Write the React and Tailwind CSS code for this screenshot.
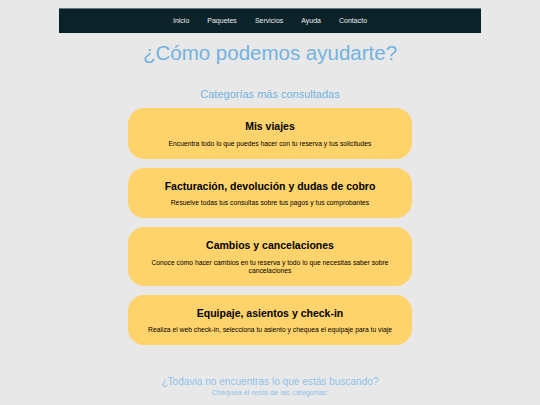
export default function App() {
  const categories = [
    {
      title: "Mis viajes",
      text: "Encuentra todo lo que puedes hacer con tu reserva y tus solicitudes",
    },
    {
      title: "Facturación, devolución y dudas de cobro",
      text: "Resuelve todas tus consultas sobre tus pagos y tus comprobantes",
    },
    {
      title: "Cambios y cancelaciones",
      text: "Conoce cómo hacer cambios en tu reserva y todo lo que necesitas saber sobre cancelaciones",
    },
    {
      title: "Equipaje, asientos y check-in",
      text: "Realiza el web check-in, selecciona tu asiento y chequea el equipaje para tu viaje",
    },
  ];

  return (
    <div className="min-h-[405px] bg-[#e8e8e8] pt-2 font-['Liberation_Sans',Arial,sans-serif]">
      {/* NAV */}
      <nav className="mx-auto w-[422px] h-[25px] bg-[#0c2229] border-t border-[#5b7a80] flex items-center justify-center gap-[18px] text-[7px] text-[#e6eef0]">
        <span>Inicio</span>
        <span>Paquetes</span>
        <span>Servicios</span>
        <span>Ayuda</span>
        <span>Contacto</span>
      </nav>

      {/* TITLE */}
      <h1 className="mt-[7px] text-center text-[20.5px] leading-[26px] text-[#72b3e0]">
        ¿Cómo podemos ayudarte?
      </h1>

      <h2 className="mt-[21px] text-center text-[11px] leading-[14px] text-[#72b3e0]">
        Categorías más consultadas
      </h2>

      {/* CARDS */}
      <div className="mx-auto mt-[7px] w-[284px] flex flex-col gap-[9px]">
        {categories.map((c) => (
          <div
            key={c.title}
            className="bg-[#ffd36b] rounded-[16px] px-4 py-[11px] text-center text-black"
          >
            <h3 className="font-bold text-[10.5px] leading-[14px]">{c.title}</h3>
            <p className="mt-[6.5px] text-[6.75px] leading-[8px]">{c.text}</p>
          </div>
        ))}
      </div>

      {/* FOOTER */}
      <div className="mt-[31px] text-center text-[#8ec2e8]">
        <p className="text-[10.1px] leading-[12px]">
          ¿Todavia no encuentras lo que estás buscando?
        </p>
        <p className="text-[7.4px] leading-[9px]">
          Chequea el resto de las categorías:
        </p>
      </div>
    </div>
  );
}
